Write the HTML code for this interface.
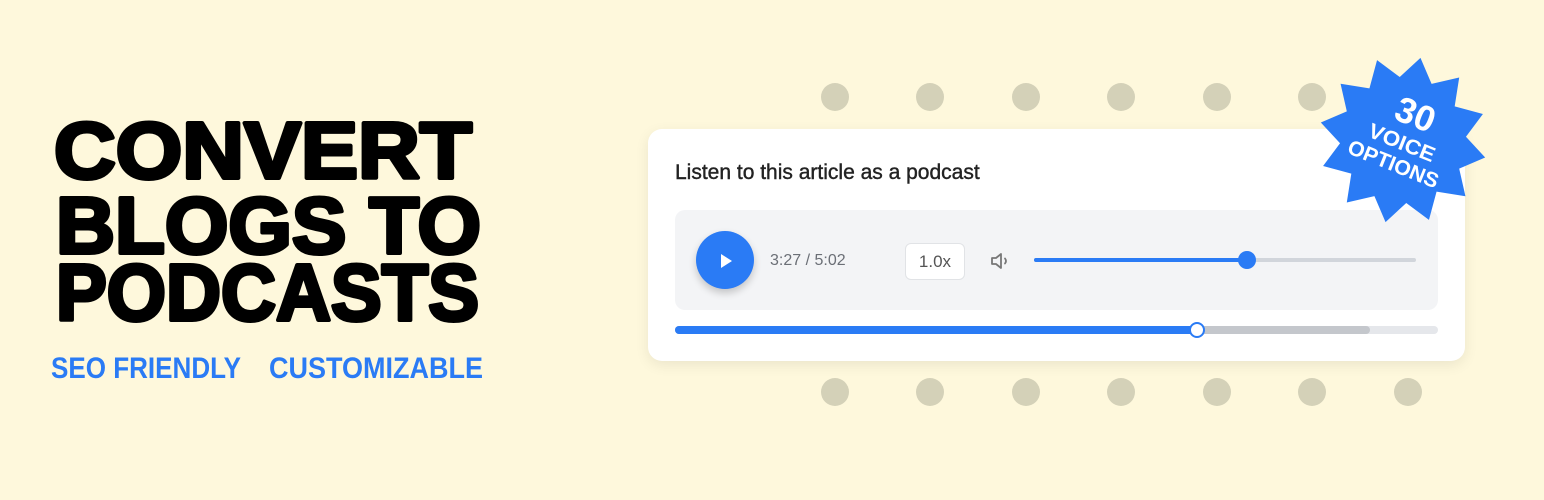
<!DOCTYPE html>
<html><head><meta charset="utf-8"><style>
html,body{margin:0;padding:0}
body{width:1544px;height:500px;background:#fef8dc;position:relative;overflow:hidden;font-family:"Liberation Sans",sans-serif}
.dot{position:absolute;width:28px;height:28px;border-radius:50%;background:#d4d1b8}
.card{position:absolute;left:648px;top:129px;width:817px;height:232px;background:#fff;border-radius:14px;box-shadow:0 4px 14px rgba(0,0,0,0.08)}
.abs{position:absolute}
</style></head><body>
<svg class="abs" style="left:0;top:0" width="520" height="420">
<g font-family="Liberation Sans" font-weight="bold" font-size="80" fill="#000" stroke="#000" stroke-width="4" stroke-linejoin="round">
<text x="54" y="178" textLength="418" lengthAdjust="spacingAndGlyphs">CONVERT</text>
<text x="56" y="253" textLength="425" lengthAdjust="spacingAndGlyphs">BLOGS TO</text>
<text x="56" y="320" textLength="423" lengthAdjust="spacingAndGlyphs">PODCASTS</text>
</g>
<g font-family="Liberation Sans" font-weight="bold" font-size="30" fill="#2a7bf5">
<text x="51" y="378" textLength="190" lengthAdjust="spacingAndGlyphs">SEO FRIENDLY</text>
<text x="269" y="378" textLength="214" lengthAdjust="spacingAndGlyphs">CUSTOMIZABLE</text>
</g>
</svg>

<div class="dot" style="left:821px;top:83px"></div>
<div class="dot" style="left:916px;top:83px"></div>
<div class="dot" style="left:1012px;top:83px"></div>
<div class="dot" style="left:1107px;top:83px"></div>
<div class="dot" style="left:1203px;top:83px"></div>
<div class="dot" style="left:1298px;top:83px"></div>
<div class="dot" style="left:821px;top:378px"></div>
<div class="dot" style="left:916px;top:378px"></div>
<div class="dot" style="left:1012px;top:378px"></div>
<div class="dot" style="left:1107px;top:378px"></div>
<div class="dot" style="left:1203px;top:378px"></div>
<div class="dot" style="left:1298px;top:378px"></div>
<div class="dot" style="left:1394px;top:378px"></div>

<div class="card">
  <div class="abs" style="left:27px;top:32px;font-size:21px;color:#222;-webkit-text-stroke:0.4px #222">Listen to this article as a podcast</div>
  <div class="abs" style="left:27px;top:81px;width:763px;height:100px;background:#f3f4f6;border-radius:10px"></div>
  <div class="abs" style="left:48px;top:102px;width:58px;height:58px;border-radius:50%;background:#2a7bf5;box-shadow:0 4px 8px rgba(0,0,0,0.2)"></div>
  <svg class="abs" style="left:72px;top:124px" width="14" height="16"><path d="M1 1 L12 8 L1 15 Z" fill="#fff"/></svg>
  <div class="abs" style="left:122px;top:123px;font-size:16px;color:#6b6f76">3:27 / 5:02</div>
  <div class="abs" style="left:257px;top:114px;width:58px;height:35px;border:1px solid #e1e3e6;border-radius:6px;background:#fff;font-size:17px;color:#555;text-align:center;line-height:35px">1.0x</div>
  <svg class="abs" style="left:342px;top:122px" width="22" height="20"><path d="M2 7 H6 L11 3 V17 L6 13 H2 Z" fill="none" stroke="#777" stroke-width="1.8" stroke-linejoin="round"/><path d="M15 7.5 Q17 10 15 12.5" fill="none" stroke="#777" stroke-width="1.8" stroke-linecap="round"/></svg>
  <div class="abs" style="left:386px;top:129px;width:382px;height:4px;background:#d1d5db;border-radius:2px"></div>
  <div class="abs" style="left:386px;top:129px;width:213px;height:4px;background:#2a7bf5;border-radius:2px"></div>
  <div class="abs" style="left:590px;top:122px;width:18px;height:18px;border-radius:50%;background:#2a7bf5"></div>
  <div class="abs" style="left:27px;top:197px;width:763px;height:8px;background:#e5e7eb;border-radius:4px"></div>
  <div class="abs" style="left:27px;top:197px;width:695px;height:8px;background:#c4c7cc;border-radius:4px"></div>
  <div class="abs" style="left:27px;top:197px;width:522px;height:8px;background:#2a7bf5;border-radius:4px"></div>
  <div class="abs" style="left:541px;top:193px;width:12px;height:12px;border-radius:50%;background:#fff;border:2px solid #2a7bf5"></div>
</div>

<svg class="abs" style="left:1313px;top:50px" width="180" height="180" viewBox="-90 -90 180 180">
<polygon fill="#2a7bf5" transform="rotate(12) scale(1.05)" points="0,-80 15.5,-58 40,-69.3 41.5,-41.5 69.3,-40 58,-15.5 80,0 58,15.5 69.3,40 41.5,41.5 40,69.3 15.5,58 0,80 -15.5,58 -40,69.3 -41.5,41.5 -69.3,40 -58,15.5 -80,0 -58,-15.5 -69.3,-40 -41.5,-41.5 -40,-69.3 -15.5,-58"/>
<g transform="rotate(22)" fill="#fff" font-family="Liberation Sans" font-weight="bold" text-anchor="middle">
<text x="2" y="-16" font-size="36">30</text>
<text x="0" y="10" font-size="21" textLength="70" lengthAdjust="spacingAndGlyphs">VOICE</text>
<text x="0" y="33" font-size="21" textLength="96" lengthAdjust="spacingAndGlyphs">OPTIONS</text>
</g>
</svg>
</body></html>
